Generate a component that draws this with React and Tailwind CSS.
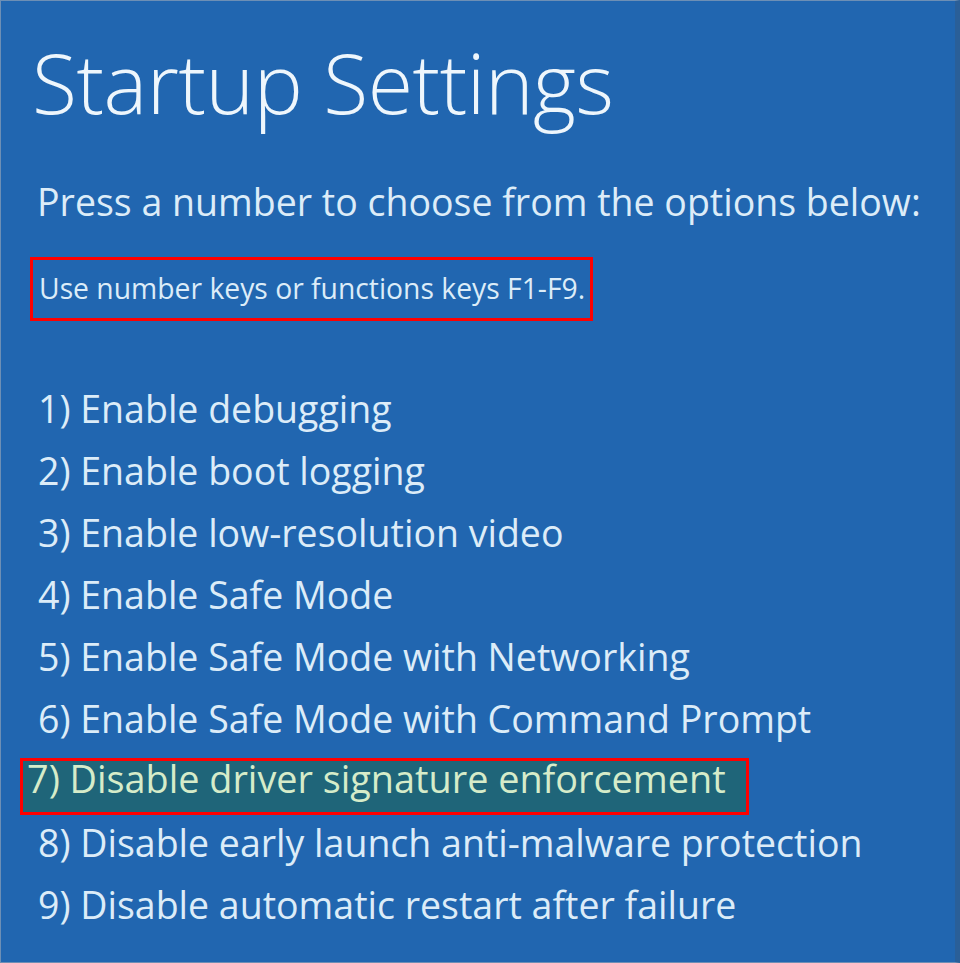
const options = [
  "Enable debugging",
  "Enable boot logging",
  "Enable low-resolution video",
  "Enable Safe Mode",
  "Enable Safe Mode with Networking",
  "Enable Safe Mode with Command Prompt",
  "Disable driver signature enforcement",
  "Disable early launch anti-malware protection",
  "Disable automatic restart after failure",
];

export default function App() {
  return (
    <div className="h-[963px] w-[960px] overflow-hidden bg-white">
      <div
        className="flex h-full w-full flex-col border border-[#6d8fb5] border-r-[5px] border-r-[#2a5f98] bg-[#2166b0] text-[#dcecf8]"
        style={{ fontFamily: '"Open Sans", "Noto Sans", sans-serif' }}
      >
        <h1 className="ml-[31px] mt-[26px] text-[82.5px] font-light leading-[110px] tracking-[-0.5px] text-[#eef6fc]">
          Startup Settings
        </h1>

        <p className="ml-[36px] mt-[43px] text-[37.5px] leading-[44px]">
          Press a number to choose from the options below:
        </p>

        <div className="ml-[29px] mt-[33px] w-[563px] border-[3px] border-[#ff0000] pb-[11px] pl-[6px] pt-[9px]">
          <p className="text-[28.3px] leading-[38px]">Use number keys or functions keys F1-F9.</p>
        </div>

        <ol className="mt-[57px] flex flex-col text-[37.5px]">
          {options.map((label, i) =>
            i === 6 ? (
              <li
                key={label}
                className="mb-[-3px] ml-[19px] mt-[8px] h-[57px] w-[729px] border-[3px] border-[#ff0000] bg-[#1f6579] pl-[4px] text-[37.8px] leading-[36px] text-[#d6ecc9]"
              >
                {i + 1}) {label}
              </li>
            ) : (
              <li key={label} className="ml-[37px] h-[62px] leading-[62px]">
                {i + 1}) {label}
              </li>
            )
          )}
        </ol>
      </div>
    </div>
  );
}
